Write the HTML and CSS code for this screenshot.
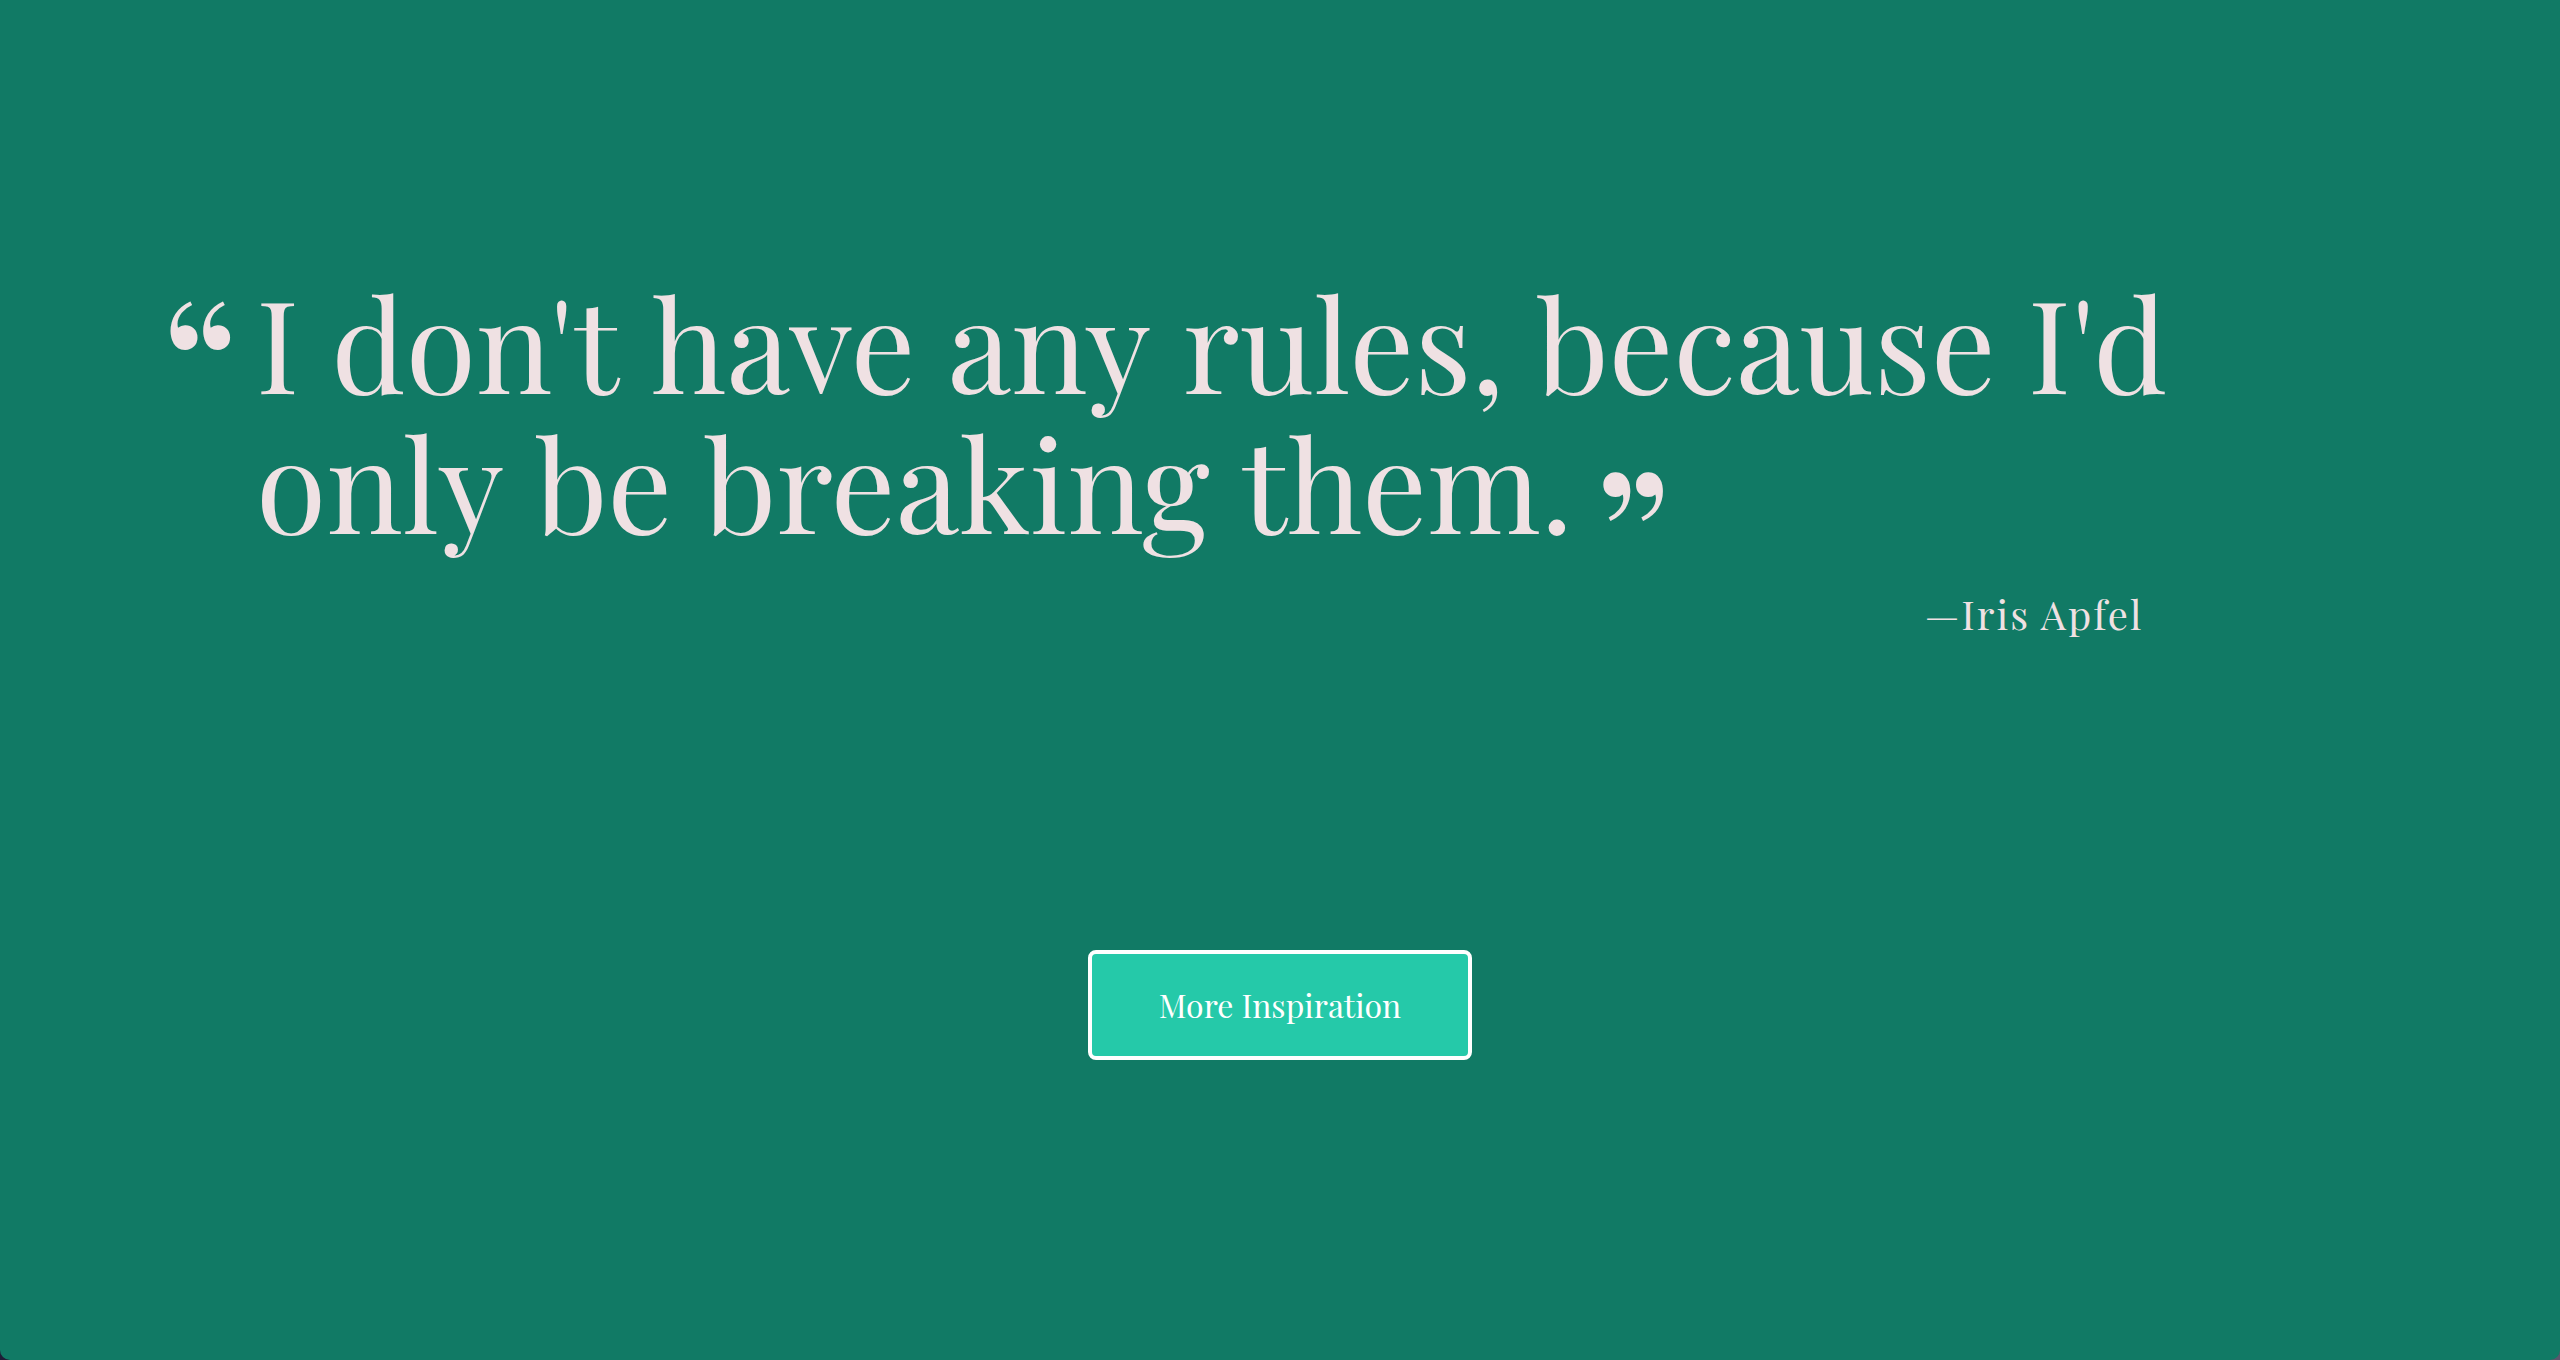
FILE: index.html
```html
<!DOCTYPE html>
<html lang="en">
<head>
<meta charset="utf-8">
<meta name="viewport" content="width=device-width, initial-scale=1">
<title>Inspiration</title>
<link rel="stylesheet" href="styles.css">
</head>
<body>
<main class="page">
  <figure class="quote">
    <span class="mark mark-open">“</span>
    <blockquote class="quote-text">I don't&nbsp;have any&nbsp;rules, because I'd<br>only&nbsp;be breaking&nbsp;them.<span class="mark mark-close">”</span></blockquote>
    <figcaption class="author">—Iris Apfel</figcaption>
  </figure>
  <button class="more" type="button">More Inspiration</button>
</main>
</body>
</html>
```
FILE: styles.css
```css
* {
  box-sizing: border-box;
}

body {
  margin: 0;
  background: linear-gradient(90deg, #1e1d36, #5c566c);
  color: #efe1e3;
  font-family: "Playfair Display", "Liberation Serif", serif;
}

.page {
  min-height: 100vh;
  padding: 271px 0 0;
  background: #117a65;
  border-radius: 0 0 10px 10px;
}

.quote {
  display: grid;
  grid-template-columns: 96px max-content;
  margin: 0 0 0 160px;
}

.quote-text {
  margin: 0;
  font-size: 128px;
  line-height: 140px;
}

.mark {
  font-size: 192px;
  line-height: 140px;
}

.mark-open {
  padding-top: 20px;
}

.mark-close {
  margin-left: 20px;
  line-height: 0;
  vertical-align: -78px;
}

.author {
  grid-column: 2;
  margin-top: 35px;
  padding-right: 24px;
  font-size: 40px;
  line-height: 56px;
  letter-spacing: 2px;
  text-align: right;
}

.more {
  display: block;
  margin: 308px auto 0;
  padding: 24px 67px;
  border: 4px solid #fff;
  border-radius: 8px;
  background: #25c9a9;
  color: #fff;
  font-family: inherit;
  font-size: 32px;
  line-height: 54px;
}
```
